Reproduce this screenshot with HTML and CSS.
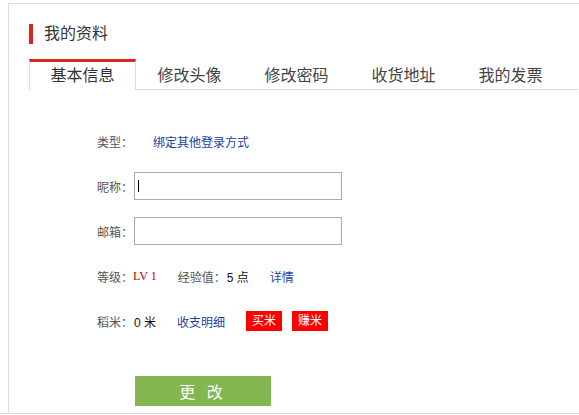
FILE: index.html
```html
<!DOCTYPE html>
<html lang="zh-CN">
<head>
<meta charset="utf-8">
<title>我的资料</title>
<link rel="stylesheet" href="styles.css">
</head>
<body>
<div class="page">
  <div class="panel">
    <h2 class="title"><span class="title-bar"></span>我的资料</h2>
    <ul class="tabs">
      <li class="tab active">基本信息</li>
      <li class="tab">修改头像</li>
      <li class="tab">修改密码</li>
      <li class="tab">收货地址</li>
      <li class="tab">我的发票</li>
    </ul>
    <div class="form">
      <div class="row">
        <span class="label">类型：</span>
        <a class="link bind">绑定其他登录方式</a>
      </div>
      <div class="row">
        <span class="label">昵称：</span>
        <span class="field"><input class="input" type="text"><span class="caret"></span></span>
      </div>
      <div class="row">
        <span class="label">邮箱：</span>
        <span class="field"><input class="input" type="text"></span>
      </div>
      <div class="row">
        <span class="label">等级：</span>
        <span class="level">LV 1</span>
        <span class="label exp">经验值：</span>
        <span class="value">5 点</span>
        <a class="link detail">详情</a>
      </div>
      <div class="row">
        <span class="label">稻米：</span>
        <span class="value">0 米</span>
        <a class="link bill">收支明细</a>
        <span class="badge buy">买米</span>
        <span class="badge earn">赚米</span>
      </div>
      <button class="submit" type="button">更 改</button>
    </div>
  </div>
  <div class="footer-line"></div>
</div>
</body>
</html>
```
FILE: styles.css
```css
html, body {
  margin: 0;
  padding: 0;
  background: #fff;
  overflow: hidden;
}
body {
  font-family: "Liberation Sans", "Noto Sans CJK SC", sans-serif;
  font-size: 12px;
  color: #555;
}
.page {
  width: 579px;
  height: 415px;
  overflow: hidden;
  padding-top: 3px;
  box-sizing: border-box;
}
.panel {
  margin-left: 8px;
  width: 620px;
  height: 410px;
  box-sizing: border-box;
  border-top: 1px solid #ddd;
  border-left: 1px solid #ddd;
  padding: 20px 0 0 20px;
}
.title {
  margin: 0;
  height: 20px;
  display: flex;
  align-items: center;
  font-size: 16px;
  font-weight: normal;
  color: #333;
  line-height: 20px;
}
.title-bar {
  width: 4px;
  height: 20px;
  background: #d9251d;
  margin-right: 11px;
}
.tabs {
  list-style: none;
  margin: 15px 0 0 0;
  padding: 0;
  width: 549px;
  height: 30px;
  display: flex;
  border-bottom: 1px solid #ddd;
}
.tab {
  width: 107px;
  height: 27px;
  box-sizing: content-box;
  border-top: 3px solid transparent;
  text-align: center;
  font-size: 16px;
  line-height: 27px;
  color: #444;
}
.tab.active {
  width: 105px;
  border-top-color: #d9251d;
  border-left: 1px solid #ddd;
  border-right: 1px solid #ddd;
  background: #fff;
  height: 28px;
  margin-bottom: -1px;
  color: #333;
}
.form {
  margin: 37px 0 0 68px;
  display: flex;
  flex-direction: column;
  gap: 17px;
}
.row {
  height: 28px;
  display: flex;
  align-items: center;
}
.label {
  color: #555;
}
.link {
  color: #1b3fa6;
  cursor: pointer;
}
.bind {
  margin-left: 20px;
}
.field {
  position: relative;
  display: block;
}
.input {
  display: block;
  margin: 0 0 0 1px;
  width: 208px;
  height: 28px;
  box-sizing: border-box;
  border: 1px solid #aaa;
  padding: 0 4px;
  outline: none;
  font-size: 12px;
}
.caret {
  position: absolute;
  left: 5px;
  top: 8px;
  width: 1px;
  height: 12px;
  background: #000;
}
.level {
  font-family: "Liberation Serif", serif;
  color: #c40000;
  font-size: 12px;
}
.exp {
  margin-left: 21px;
}
.value {
  color: #111;
  margin-left: 1px;
}
.detail {
  margin-left: 21px;
}
.bill {
  margin-left: 21px;
}
.badge {
  width: 36px;
  height: 20px;
  line-height: 20px;
  text-align: center;
  background: #f00;
  color: #fff;
}
.buy {
  margin-left: 21px;
}
.earn {
  margin-left: 10px;
}
.submit {
  margin: 24px 0 0 38px;
  width: 136px;
  height: 30px;
  border: none;
  background: #84b652;
  color: #fff;
  font-family: "Noto Sans CJK SC", sans-serif;
  font-size: 16px;
  letter-spacing: 4px;
  padding: 0;
  cursor: pointer;
}
.footer-line {
  height: 0;
  border-top: 1px solid #ddd;
}
```
